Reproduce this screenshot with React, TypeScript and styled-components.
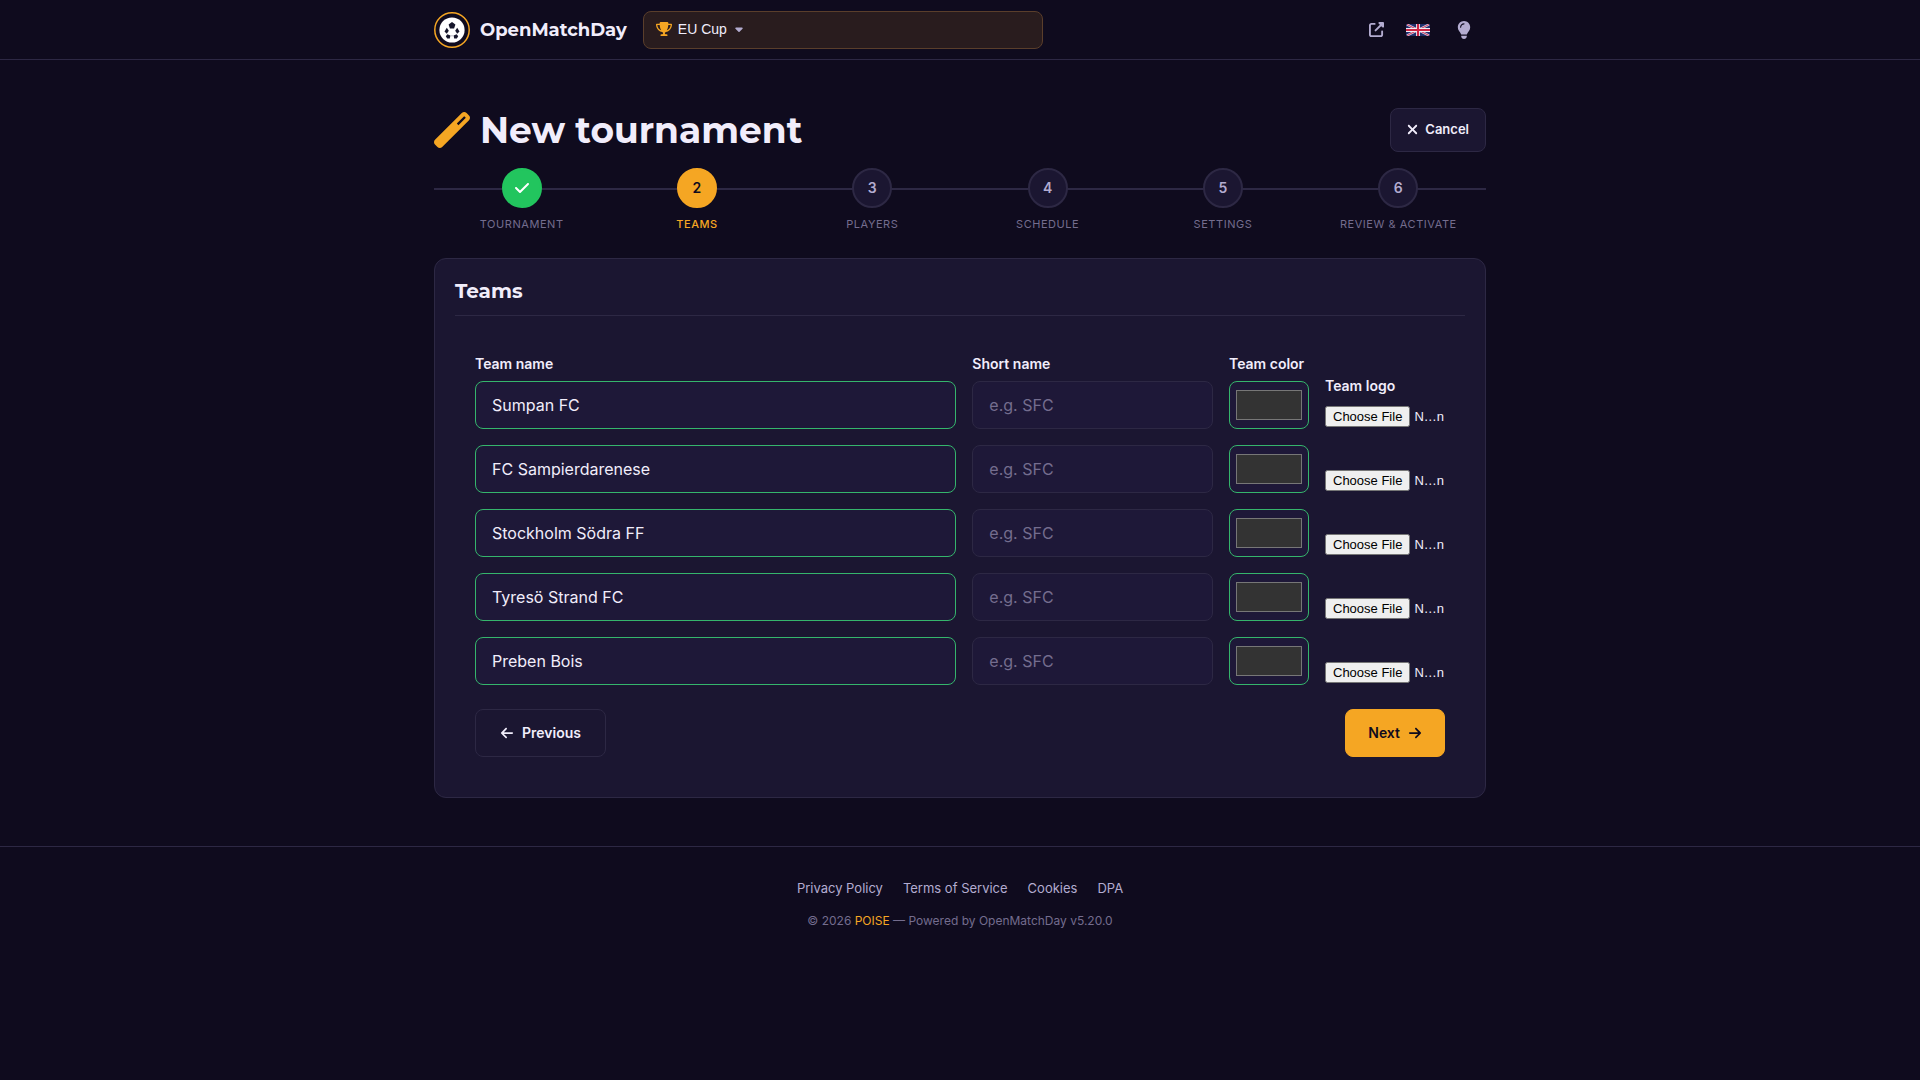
import React from "react";
import styled, { createGlobalStyle } from "styled-components";
import {
  FaArrowLeft,
  FaArrowRight,
  FaCaretDown,
  FaCheck,
  FaLightbulb,
  FaTrophy,
  FaUpRightFromSquare,
  FaWandMagic,
  FaXmark,
} from "react-icons/fa6";

const color = {
  page: "#0f0b1e",
  card: "#1b1631",
  field: "#1e1838",
  line: "#2d2844",
  text: "#f1edfb",
  soft: "#b3acd0",
  muted: "#746d8e",
  accent: "#f5a623",
  done: "#22c55e",
  valid: "#35b56c",
};

const headingFont = `Montserrat, Inter, "Open Sans", sans-serif`;

const GlobalStyle = createGlobalStyle`
  *, *::before, *::after { box-sizing: border-box; }
  body {
    margin: 0;
    background: ${color.page};
    color: ${color.text};
    font-family: Inter, "Liberation Sans", sans-serif;
    font-size: 16px;
    line-height: 24px;
  }
  h1, h2, p, ol, ul { margin: 0; padding: 0; }
  ol, ul { list-style: none; }
  svg { flex: none; }
`;

const Container = styled.div`
  width: 100%;
  max-width: 1100px;
  margin: 0 auto;
  padding: 0 24px;
`;

const TopBar = styled.header`
  border-bottom: 1px solid ${color.line};
`;

const TopBarInner = styled(Container)`
  display: flex;
  align-items: center;
  height: 59px;
`;

const Brand = styled.a`
  display: flex;
  align-items: center;
  gap: 10px;
  margin-right: 16px;
  color: ${color.text};
  font: 700 18px/24px ${headingFont};
  text-decoration: none;
`;

const TournamentPicker = styled.button`
  display: flex;
  align-items: center;
  gap: 6px;
  flex: 0 1 400px;
  height: 38px;
  padding: 0 12px 2px;
  border: 1px solid #5a3e2b;
  border-radius: 8px;
  background: #291c1e;
  color: ${color.text};
  font: 14px/20px "Liberation Sans", Arial, sans-serif;
  text-align: left;
`;

const TopActions = styled.nav`
  display: flex;
  align-items: center;
  margin-left: auto;
`;

const IconButton = styled.button<{ $width: number }>`
  display: grid;
  place-items: center;
  width: ${(p) => p.$width}px;
  height: 36px;
  padding: 0;
  border: 0;
  background: none;
  color: ${color.soft};
`;

const Main = styled(Container).attrs({ as: "main" })`
  padding-top: 48px;
  padding-bottom: 48px;
`;

const TitleRow = styled.div`
  display: flex;
  align-items: center;
  justify-content: space-between;
  margin-bottom: 16px;
`;

const Title = styled.h1`
  display: flex;
  align-items: center;
  gap: 10px;
  font: 700 36px/44px ${headingFont};

  svg { color: ${color.accent}; }
`;

const Button = styled.button<{ $primary?: boolean }>`
  display: inline-flex;
  align-items: center;
  justify-content: center;
  gap: 8px;
  height: 48px;
  padding: 0 ${(p) => (p.$primary ? 22 : 24)}px;
  border: 1px solid ${(p) => (p.$primary ? color.accent : color.line)};
  border-radius: 8px;
  background: ${(p) => (p.$primary ? color.accent : color.card)};
  color: ${(p) => (p.$primary ? color.page : color.text)};
  font: 600 14px/20px Inter, sans-serif;
`;

const SmallButton = styled(Button)`
  gap: 5px;
  height: 44px;
  padding: 0 16px 2px 14px;
  font-size: 13px;
`;

const Steps = styled.ol`
  display: grid;
  grid-template-columns: repeat(6, 1fr);
  margin-bottom: 26px;
  background: linear-gradient(${color.line}, ${color.line}) 0 20px / 100% 2px no-repeat;
`;

const Step = styled.li<{ $active: boolean }>`
  display: flex;
  flex-direction: column;
  align-items: center;
  gap: 8px;
  color: ${(p) => (p.$active ? color.accent : color.muted)};
  font-size: 11px;
  font-weight: ${(p) => (p.$active ? 500 : 400)};
  line-height: 16px;
  letter-spacing: 0.05em;
  text-transform: uppercase;
`;

type StepState = "done" | "active" | "todo";

const stepFill = { done: color.done, active: color.accent, todo: color.card };
const stepInk = { done: "#ffffff", active: color.page, todo: color.soft };

const StepDot = styled.span<{ $state: StepState }>`
  display: grid;
  place-items: center;
  width: 40px;
  height: 40px;
  border: 2px solid ${(p) => (p.$state === "todo" ? color.line : stepFill[p.$state])};
  border-radius: 50%;
  background: ${(p) => stepFill[p.$state]};
  color: ${(p) => stepInk[p.$state]};
  font-size: 14px;
  font-weight: 600;
  letter-spacing: normal;
`;

const Card = styled.section`
  padding: 20px;
  border: 1px solid ${color.line};
  border-radius: 12px;
  background: ${color.card};
`;

const CardTitle = styled.h2`
  padding-bottom: 12px;
  border-bottom: 1px solid ${color.line};
  font: 700 20px/24px ${headingFont};
`;

const Form = styled.form`
  padding: 36px 20px 20px;
`;

const TeamList = styled.div`
  display: grid;
  gap: 16px;
`;

const TeamRow = styled.div`
  display: grid;
  grid-template-columns: 2fr 1fr 80px 120px;
  align-items: end;
  gap: 16px;
`;

const Field = styled.div`
  display: flex;
  flex-direction: column;
  gap: 6px;
  min-width: 0;
`;

const Label = styled.label`
  font-size: 14px;
  font-weight: 600;
  line-height: 23px;
`;

const TextInput = styled.input<{ $valid?: boolean }>`
  width: 100%;
  height: 48px;
  padding: 0 16px;
  border: 1px solid ${(p) => (p.$valid ? color.valid : color.line)};
  border-radius: 8px;
  background: ${color.field};
  color: ${color.text};
  font: 16px/24px Inter, sans-serif;

  &::placeholder { color: ${color.muted}; opacity: 1; }
`;

const ColorInput = styled.input`
  width: 100%;
  height: 48px;
  padding: 4px;
  border: 1px solid ${color.valid};
  border-radius: 8px;
  background: ${color.field};
`;

const FileField = styled(Field)`
  gap: 9px;
  padding-bottom: 2px;
`;

const FileInput = styled.input`
  width: 100%;
  height: 21px;
  color: ${color.text};
  font-family: "Liberation Sans", Arial, sans-serif;
  font-size: 13px;

  &::file-selector-button {
    height: 21px;
    font: inherit;
  }
`;

const FormActions = styled.div`
  display: flex;
  justify-content: space-between;
  margin-top: 24px;
`;

const Footer = styled.footer`
  border-top: 1px solid ${color.line};
  padding: 32px 24px;
  text-align: center;
`;

const FooterLinks = styled.nav`
  display: flex;
  justify-content: center;
  gap: 20px;
  margin-bottom: 14px;
  font-size: 13px;
  line-height: 18px;

  a { color: ${color.soft}; text-decoration: none; }
`;

const Copyright = styled.p`
  color: ${color.muted};
  font-size: 12px;
  line-height: 20px;

  a { color: ${color.accent}; text-decoration: none; }
`;

const BrandLogo = () => (
  <svg width="36" height="36" viewBox="0 0 36 36" aria-hidden="true">
    <circle cx="18" cy="18" r="17.2" fill={color.page} stroke={color.accent} strokeWidth="1.5" />
    <circle cx="18" cy="18" r="12.6" fill="#fff" />
    <g fill="#16162c">
      <path d="M18 10l3.4 2.5-1.3 4h-4.2l-1.3-4z" />
      <path d="M12.8 15.8l2 2.9-2 3-2.3-2.2z" />
      <path d="M23.2 15.8l2.3 3.7-2.3 2.2-2-3z" />
      <path d="M13.4 22.2l3 1.4-.6 3-2.6-.2-1.4-2.2z" />
      <path d="M22.6 22.2l1.6 2-1.4 2.2-2.6.2-.6-3z" />
    </g>
    <path d="M16.6 23.8h2.8" stroke="#a9a8b8" strokeWidth=".8" />
  </svg>
);

const UnionFlag = () => (
  <svg width="24" height="12" viewBox="0 0 48 24" aria-hidden="true">
    <rect width="48" height="24" rx="2" fill="#1f2f6b" />
    <path d="M2 1l44 22M46 1L2 23" stroke="#d9d5e8" strokeWidth="4.6" />
    <path d="M2 1l44 22M46 1L2 23" stroke="#cc2342" strokeWidth="1.8" />
    <path d="M24 0v24M0 12h48" stroke="#f2f0f7" strokeWidth="7.6" />
    <path d="M24 0v24M0 12h48" stroke="#cc2342" strokeWidth="4.2" />
  </svg>
);

const steps = ["Tournament", "Teams", "Players", "Schedule", "Settings", "Review & Activate"];
const currentStep = 1;

const teams = [
  "Sumpan FC",
  "FC Sampierdarenese",
  "Stockholm Södra FF",
  "Tyresö Strand FC",
  "Preben Bois",
];

const stateOf = (index: number): StepState =>
  index < currentStep ? "done" : index === currentStep ? "active" : "todo";

function TeamFields({ name, index }: { name: string; index: number }) {
  const first = index === 0;
  const id = (part: string) => `team-${index}-${part}`;
  const hint = (text: string) => (first ? undefined : `${text} ${index + 1}`);

  return (
    <TeamRow>
      <Field>
        {first && <Label htmlFor={id("name")}>Team name</Label>}
        <TextInput id={id("name")} $valid defaultValue={name} aria-label={hint("Team name")} />
      </Field>
      <Field>
        {first && <Label htmlFor={id("short")}>Short name</Label>}
        <TextInput id={id("short")} placeholder="e.g. SFC" aria-label={hint("Short name")} />
      </Field>
      <Field>
        {first && <Label htmlFor={id("color")}>Team color</Label>}
        <ColorInput id={id("color")} type="color" defaultValue="#333333" aria-label={hint("Team color")} />
      </Field>
      <FileField>
        {first && <Label htmlFor={id("logo")}>Team logo</Label>}
        <FileInput id={id("logo")} type="file" aria-label={hint("Team logo")} />
      </FileField>
    </TeamRow>
  );
}

export default function App() {
  return (
    <>
      <GlobalStyle />
      <TopBar>
        <TopBarInner>
          <Brand href="#">
            <BrandLogo />
            OpenMatchDay
          </Brand>
          <TournamentPicker type="button" aria-haspopup="menu">
            <FaTrophy size={16} color={color.accent} />
            EU Cup
            <FaCaretDown size={12} color={color.soft} />
          </TournamentPicker>
          <TopActions>
            <IconButton type="button" $width={36} aria-label="Open public site">
              <FaUpRightFromSquare size={15} />
            </IconButton>
            <IconButton type="button" $width={48} aria-label="Language">
              <UnionFlag />
            </IconButton>
            <IconButton type="button" $width={44} aria-label="Tips">
              <FaLightbulb size={18} />
            </IconButton>
          </TopActions>
        </TopBarInner>
      </TopBar>

      <Main>
        <TitleRow>
          <Title>
            <FaWandMagic size={36} />
            New tournament
          </Title>
          <SmallButton type="button">
            <FaXmark size={15} />
            Cancel
          </SmallButton>
        </TitleRow>

        <Steps>
          {steps.map((label, i) => (
            <Step key={label} $active={i === currentStep}>
              <StepDot $state={stateOf(i)}>{i < currentStep ? <FaCheck size={16} /> : i + 1}</StepDot>
              {label}
            </Step>
          ))}
        </Steps>

        <Card>
          <CardTitle>Teams</CardTitle>
          <Form>
            <TeamList>
              {teams.map((name, i) => (
                <TeamFields key={name} name={name} index={i} />
              ))}
            </TeamList>
            <FormActions>
              <Button type="button">
                <FaArrowLeft size={14} />
                Previous
              </Button>
              <Button type="button" $primary>
                Next
                <FaArrowRight size={14} />
              </Button>
            </FormActions>
          </Form>
        </Card>
      </Main>

      <Footer>
        <FooterLinks>
          <a href="#privacy">Privacy Policy</a>
          <a href="#terms">Terms of Service</a>
          <a href="#cookies">Cookies</a>
          <a href="#dpa">DPA</a>
        </FooterLinks>
        <Copyright>
          © 2026 <a href="#poise">POISE</a> — Powered by OpenMatchDay v5.20.0
        </Copyright>
      </Footer>
    </>
  );
}
